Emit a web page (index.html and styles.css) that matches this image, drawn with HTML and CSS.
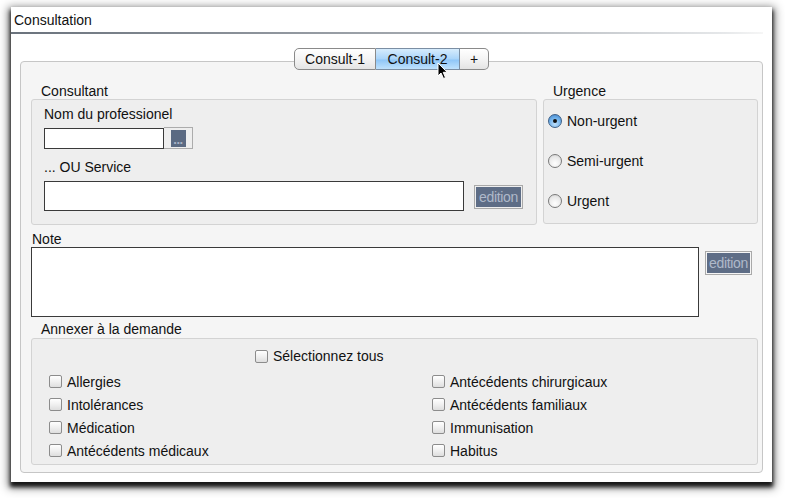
FILE: index.html
```html
<!DOCTYPE html>
<html lang="fr">
<head>
<meta charset="utf-8">
<title>Consultation</title>
<link rel="stylesheet" href="styles.css">
</head>
<body>
<div class="window">
  <div class="title">Consultation</div>
  <div class="rule"></div>
  <div class="tabs">
    <div class="tab t1">Consult-1</div>
    <div class="tab t2 selected">Consult-2</div>
    <div class="tab t3">+</div>
  </div>
  <div class="panel">
    <div class="row1">
      <div class="group consultant">
        <div class="glabel">Consultant</div>
        <div class="gbox cbox">
          <div class="flabel first">Nom du professionel</div>
          <div class="line">
            <div class="input small"></div>
            <div class="dots"><span class="dotsinner">...</span></div>
          </div>
          <div class="flabel">... OU Service</div>
          <div class="line center">
            <div class="input wide"></div>
            <div class="edition e1"><span class="einner">edition</span></div>
          </div>
        </div>
      </div>
      <div class="group urgence">
        <div class="glabel">Urgence</div>
        <div class="gbox ubox">
          <div class="radio-row"><span class="radio on"></span><span>Non-urgent</span></div>
          <div class="radio-row"><span class="radio"></span><span>Semi-urgent</span></div>
          <div class="radio-row"><span class="radio"></span><span>Urgent</span></div>
        </div>
      </div>
    </div>
    <div class="nlabel">Note</div>
    <div class="noterow">
      <div class="textarea"></div>
      <div class="edition e2"><span class="einner">edition</span></div>
    </div>
    <div class="alabel">Annexer à la demande</div>
    <div class="gbox abox">
      <div class="selall"><span class="cb"></span><span>Sélectionnez tous</span></div>
      <div class="grid">
        <div class="cbrow"><span class="cb"></span><span>Allergies</span></div>
        <div class="cbrow"><span class="cb"></span><span>Antécédents chirurgicaux</span></div>
        <div class="cbrow"><span class="cb"></span><span>Intolérances</span></div>
        <div class="cbrow"><span class="cb"></span><span>Antécédents familiaux</span></div>
        <div class="cbrow"><span class="cb"></span><span>Médication</span></div>
        <div class="cbrow"><span class="cb"></span><span>Immunisation</span></div>
        <div class="cbrow"><span class="cb"></span><span>Antécédents médicaux</span></div>
        <div class="cbrow"><span class="cb"></span><span>Habitus</span></div>
      </div>
    </div>
  </div>
  <svg class="cursor" width="12" height="18" viewBox="0 0 12 18">
    <path d="M1 1 L1 14 L4 11 L6.5 16.5 L8.5 15.6 L6.2 10.3 L10.2 10.3 Z" fill="#000" stroke="#fff" stroke-width="1" stroke-linejoin="round"/>
  </svg>
</div>
</body>
</html>
```
FILE: styles.css
```css
* { box-sizing: border-box; }
html, body { margin: 0; padding: 0; background: #ffffff; }
body {
  font-family: "Liberation Sans", Arial, Helvetica, sans-serif;
  font-size: 14px;
  color: #111;
  min-height: 498px;
  padding-top: 7px;
  padding-left: 11px;
}
.window {
  position: relative;
  width: 761px;
  height: 475px;
  background: #ffffff;
  box-shadow: 0 4px 4px 1px rgba(0, 0, 0, 0.85), 0 3px 9px 3px rgba(0, 0, 0, 0.45);
}
.title {
  height: 25px;
  padding: 2px 0 0 3px;
  line-height: 23px;
}
.rule {
  width: 752px;
  height: 2px;
  background: linear-gradient(to right, #6a727c, #a9aeb4 60%, #e6e8ea 95%, #f6f6f6);
}
.tabs {
  position: relative;
  z-index: 2;
  display: flex;
  justify-content: center;
  margin-top: 14px;
  margin-bottom: -9px;
}
.tab {
  height: 22px;
  line-height: 20px;
  text-align: center;
  border: 1px solid #8a8a8a;
  border-left: none;
  background: linear-gradient(to bottom, #ffffff, #f4f4f4 50%, #e4e4e4);
}
.t1 { width: 82px; border-left: 1px solid #8a8a8a; border-radius: 5px 0 0 5px; }
.t2 { width: 84px; }
.t3 { width: 29px; border-radius: 0 5px 5px 0; }
.tab.selected {
  background: linear-gradient(to bottom, #d6ecfd, #a9d4fa 50%, #8fc6f7 55%, #bfe2fd);
  border-color: #7b8ea3;
}
.panel {
  margin-left: 9px;
  width: 743px;
  height: 412px;
  border: 1px solid #c6c6c6;
  border-radius: 4px;
  background: #f5f5f5;
  padding: 21px 0 0 10px;
}
.row1 { display: flex; gap: 6px; }
.glabel { height: 16px; line-height: 16px; padding-left: 10px; }
.gbox {
  border: 1px solid #d3d3d3;
  border-radius: 3px;
  background: #eeeeee;
}
.consultant { width: 506px; }
.urgence { width: 215px; }
.cbox { height: 126px; padding-left: 12px; }
.ubox { height: 125px; padding: 1px 0 0 4px; }
.flabel { line-height: 20px; height: 20px; margin-top: 8px; }
.flabel.first { margin-top: 4px; }
.line { display: flex; margin-top: 4px; }
.line.center { align-items: center; }
.input {
  background: #ffffff;
  border: 1px solid #3a3a3a;
}
.input.small { width: 120px; height: 21px; }
.input.wide { width: 420px; height: 30px; }
.dots {
  width: 29px;
  height: 22px;
  margin-top: -1px;
  border: 1px solid #acacac;
  border-left: none;
  display: flex;
  align-items: center;
  justify-content: center;
}
.dotsinner {
  display: block;
  width: 15px;
  height: 17px;
  background: #5b6a82;
  color: #a8b3c6;
  font-size: 13px;
  font-weight: bold;
  line-height: 20px;
  text-align: center;
  letter-spacing: -0.5px;
  overflow: hidden;
}
.edition {
  border: 1px solid #a9a9a9;
  padding: 1px;
  display: flex;
}
.einner {
  display: block;
  width: 100%;
  background: #5e6d86;
  color: #afb9ca;
  text-align: center;
  line-height: 20px;
  font-size: 14px;
  letter-spacing: -0.3px;
  white-space: nowrap;
  overflow: hidden;
}
.e1 { width: 49px; height: 24px; margin-left: 10px; margin-top: 1px; }
.e2 { width: 47px; height: 24px; margin-left: 6px; margin-top: 4px; }
.radio-row {
  height: 40px;
  display: flex;
  align-items: center;
  gap: 5px;
}
.radio {
  width: 14px;
  height: 14px;
  border-radius: 50%;
  border: 1px solid #7a7a7a;
  background: radial-gradient(circle at 50% 70%, #ffffff, #e9e9e9 60%, #cfcfcf);
  position: relative;
}
.radio.on {
  border-color: #3d5f86;
  background: radial-gradient(circle at 50% 75%, #bfe0fb, #6fb0ea 55%, #3c7fc6);
}
.radio.on::after {
  content: "";
  position: absolute;
  left: 4px;
  top: 4px;
  width: 4px;
  height: 4px;
  border-radius: 50%;
  background: #111;
}
.nlabel { height: 16px; line-height: 16px; margin-top: 6px; padding-left: 1px; }
.noterow { display: flex; align-items: flex-start; }
.textarea {
  width: 668px;
  height: 70px;
  background: #ffffff;
  border: 1px solid #3a3a3a;
}
.alabel { height: 16px; line-height: 16px; margin-top: 4px; margin-bottom: 1px; padding-left: 10px; }
.abox { width: 727px; height: 127px; padding-top: 7px; }
.selall {
  height: 20px;
  display: flex;
  align-items: center;
  gap: 5px;
  margin-left: 223px;
}
.grid {
  margin-top: 4px;
  display: grid;
  grid-template-columns: 383px 1fr;
  padding-left: 17px;
}
.cbrow {
  height: 23px;
  display: flex;
  align-items: center;
  gap: 5px;
}
.cb {
  display: block;
  width: 13px;
  height: 13px;
  border: 1px solid #8c8c8c;
  border-radius: 2px;
  background: linear-gradient(to bottom, #ffffff, #f0f0f0 50%, #dedede);
}
.cursor {
  position: absolute;
  left: 426px;
  top: 55px;
  z-index: 5;
}
```
